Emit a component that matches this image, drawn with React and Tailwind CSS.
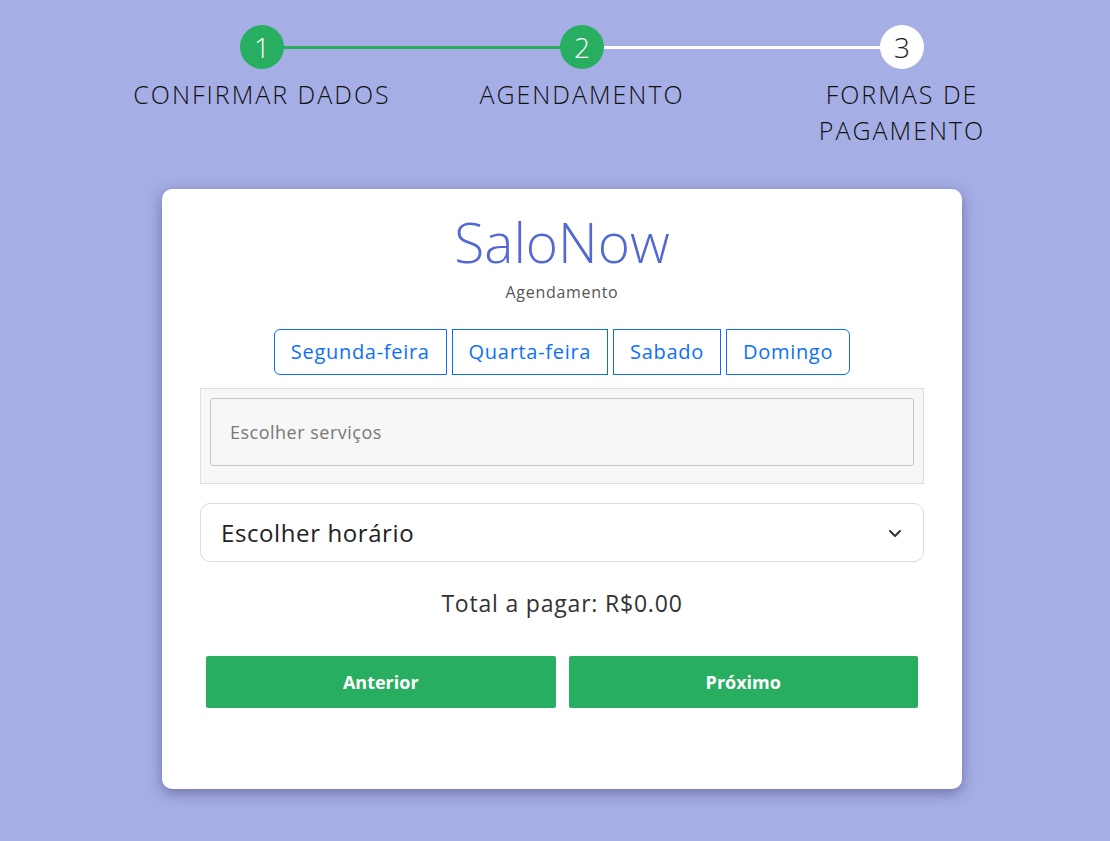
import React from "react";

const days = ["Segunda-feira", "Quarta-feira", "Sabado", "Domingo"];

const Step = ({ n, label, done, first, last }) => (
  <div className="relative flex w-[320px] flex-col items-center">
    {!first && (
      <div className={`absolute left-0 right-1/2 top-[21px] h-[3px] ${done ? "bg-[#27ae60]" : "bg-white"}`} />
    )}
    {!last && (
      <div className={`absolute left-1/2 right-0 top-[21px] h-[3px] ${n === 1 ? "bg-[#27ae60]" : "bg-white"}`} />
    )}
    <div
      className={`relative z-10 flex h-[44px] w-[44px] items-center justify-center rounded-full text-[28px] font-light ${
        done ? "bg-[#27ae60] text-white" : "bg-white text-[#222]"
      }`}
    >
      {n}
    </div>
    <div className="mt-[7px] text-center text-[25px] font-light leading-[36px] tracking-[2px] text-[#111]">{label}</div>
  </div>
);

export default function App() {
  return (
    <div className="min-h-[841px] bg-[#a6aee6] font-['Open_Sans',sans-serif]">
      <div className="flex justify-center pl-[54px] pt-[25px]">
        <Step n={1} label="CONFIRMAR DADOS" done first />
        <Step n={2} label="AGENDAMENTO" done />
        <Step
          n={3}
          last
          label={
            <>
              FORMAS DE
              <br />
              PAGAMENTO
            </>
          }
        />
      </div>

      <div className="ml-[162px] mt-[41px] h-[600px] w-[800px] rounded-[10px] bg-white px-[38px] pt-[18px] shadow-[0_4px_14px_rgba(40,40,90,0.45)]">
        <h1 className="text-center text-[55px] font-light leading-[70px] text-[#5468d4]">SaloNow</h1>
        <p className="mt-[5px] text-center text-[16px] leading-[20px] tracking-[0.7px] text-[#555]">Agendamento</p>

        <div className="mt-[27px] flex justify-center gap-[5px]">
          {days.map((d, i) => (
            <button
              key={d}
              className={`h-[46px] border border-[#0d6efd] px-[16px] text-[20px] tracking-[0.7px] text-[#0d6efd] ${
                i === 0 ? "rounded-l-[6px]" : ""
              } ${i === days.length - 1 ? "rounded-r-[6px]" : ""}`}
            >
              {d}
            </button>
          ))}
        </div>

        <div className="mt-[13px] border border-[#dedede] bg-[#f7f7f7] px-[9px] pb-[17px] pt-[9px]">
          <div className="flex h-[68px] items-center rounded-[3px] border border-[#c8c8c8] bg-[#f7f7f7] px-[19px] text-[18px] tracking-[0.5px] text-[#777]">
            Escolher serviços
          </div>
        </div>

        <div className="mt-[19px] flex h-[59px] items-center justify-between rounded-[10px] border border-[#dcdcdc] px-[20px]">
          <span className="text-[24px] tracking-[0.6px] text-[#222]">Escolher horário</span>
          <svg width="16" height="16" viewBox="0 0 16 16" fill="none" stroke="#333" strokeWidth="2" strokeLinecap="round" strokeLinejoin="round">
            <path d="M3 6l5 5 5-5" />
          </svg>
        </div>

        <p className="mt-[25px] text-center text-[23px] leading-[32px] tracking-[0.8px] text-[#333]">Total a pagar: R$0.00</p>

        <div className="mt-[37px] flex gap-[13px] px-[6px]">
          <button className="h-[52px] flex-1 rounded-[2px] bg-[#27ae60] text-[18px] font-bold text-white">Anterior</button>
          <button className="h-[52px] flex-1 rounded-[2px] bg-[#27ae60] text-[18px] font-bold text-white">Próximo</button>
        </div>
      </div>
    </div>
  );
}
